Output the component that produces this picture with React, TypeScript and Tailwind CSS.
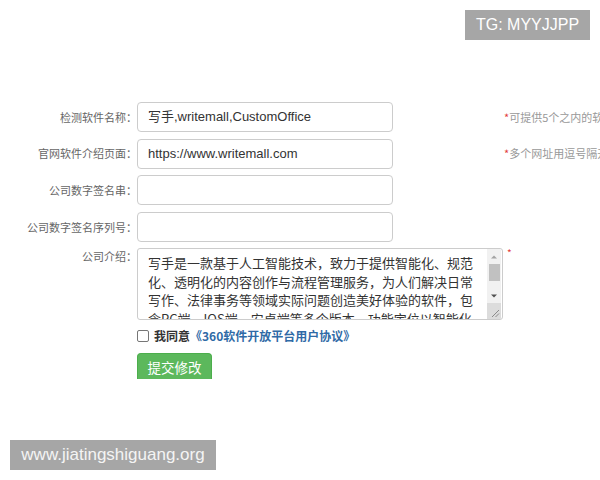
import React from "react";

const cjk = { fontFamily: '"Noto Sans CJK SC", "Noto Sans", sans-serif' };
const mixed = { fontFamily: '"Liberation Sans", "Noto Sans CJK SC", sans-serif' };

function Row({ label, value, hint }: { label: string; value?: string; hint?: string }) {
  return (
    <div className="flex items-center h-[30px] mb-[6.6px]">
      <div className="w-[137px] shrink-0 text-right text-[11px] text-[#666]">{label}</div>
      <div
        className="w-[256px] h-[30px] shrink-0 border border-[#ccc] rounded-[4px] bg-white flex items-center pl-[10px] text-[13px] text-[#333]"
        style={mixed}
      >
        {value}
      </div>
      {hint && (
        <div className="ml-[111px] shrink-0 whitespace-nowrap text-[11px] text-[#999]">
          <span className="text-[#e23c3c]">*</span>
          {hint}
        </div>
      )}
    </div>
  );
}

export default function App() {
  const lines = [
    "写手是一款基于人工智能技术，致力于提供智能化、规范",
    "化、透明化的内容创作与流程管理服务，为人们解决日常",
    "写作、法律事务等领域实际问题创造美好体验的软件，包",
    "含PC端、IOS端、安卓端等多个版本，功能定位以智能化",
  ];
  return (
    <div className="w-[600px] h-[480px] overflow-hidden bg-white flex flex-col relative" style={cjk}>
      <div className="flex justify-end pt-[10px] pr-[10px]">
        <div
          className="w-[125px] h-[30px] bg-[#a6a6a6] text-white text-[16px] flex items-center justify-center"
          style={{ fontFamily: '"Liberation Sans", Arial, sans-serif' }}
        >
          TG: MYYJJPP
        </div>
      </div>

      <div className="mt-[62px] flex flex-col">
        <Row label="检测软件名称：" value="写手,writemall,CustomOffice" hint="可提供5个之内的软件名称，用逗号隔开" />
        <Row label="官网软件介绍页面：" value="https://www.writemall.com" hint="多个网址用逗号隔开" />
        <Row label="公司数字签名串：" />
        <Row label="公司数字签名序列号：" />

        <div className="flex items-start">
          <div className="w-[137px] shrink-0 text-right text-[11px] text-[#666] pt-[0px]">公司介绍：</div>
          <div className="w-[366px] h-[72px] shrink-0 border border-[#ccc] rounded-[3px] bg-white flex overflow-hidden">
            <div className="flex-1 pl-[10px] pt-[5px] text-[13px] leading-[18.5px] text-[#333] overflow-hidden">
              {lines.map((l) => (
                <div key={l} className="whitespace-nowrap">{l}</div>
              ))}
            </div>
            <div className="w-[14px] shrink-0 bg-[#f1f1f1] flex flex-col items-center mr-[1px]">
              <svg width="14" height="14" viewBox="0 0 14 14" className="mt-[1px]">
                <path d="M4 8.5 L7 5.5 L10 8.5 Z" fill="#a3a3a3" />
              </svg>
              <div className="w-[11px] h-[17px] bg-[#c1c1c1]" />
              <div className="flex-1" />
              <svg width="14" height="14" viewBox="0 0 14 14">
                <path d="M4 5.5 L7 8.5 L10 5.5 Z" fill="#505050" />
              </svg>
              <div className="w-[14px] h-[16px] bg-[#dcdcdc] relative">
                <svg width="14" height="16" viewBox="0 0 14 16" className="absolute inset-0">
                  <path d="M5 14 L12 7 M8.5 14 L12 10.5" stroke="#8a8a8a" strokeWidth="1" />
                </svg>
              </div>
            </div>
          </div>
          <div className="ml-[4px] text-[10px] leading-[10px] text-[#e23c3c]">*</div>
        </div>

        <div className="flex items-center mt-[10px] ml-[137px] h-[12px]">
          <div className="w-[12px] h-[12px] border border-[#767676] rounded-[2px] bg-white" />
          <div className="ml-[5px] text-[12px] font-bold text-[#333] whitespace-nowrap">
            我同意<span className="text-[#2f6aa6]">《360软件开放平台用户协议》</span>
          </div>
        </div>

        <div className="ml-[137px] mt-[11px] w-[75px] h-[26px] bg-[#5cb85c] border border-[#4cae4c] border-b-0 rounded-t-[4px] text-white text-[13.5px] flex items-center justify-center">
          提交修改
        </div>
      </div>

      <div className="absolute left-[10px] top-[440px] w-[206px] h-[30px] bg-[#a6a6a6] text-[#f4f4f4] text-[17px] flex items-center justify-center"
        style={{ fontFamily: '"Liberation Sans", Arial, sans-serif' }}
      >
        www.jiatingshiguang.org
      </div>
    </div>
  );
}
